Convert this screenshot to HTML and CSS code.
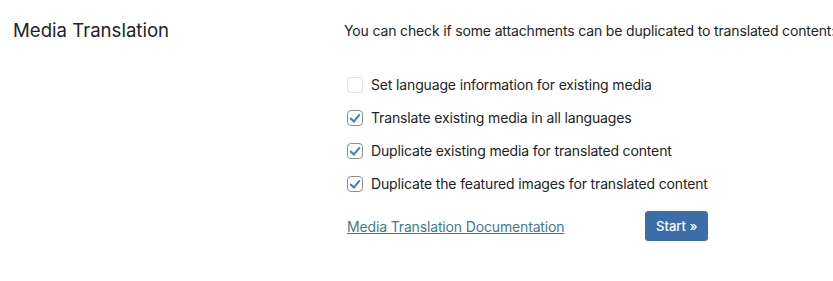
FILE: index.html
```html
<!DOCTYPE html>
<html>
<head>
    <title>Media Translation</title>
    <link rel="stylesheet" href="styles.css">
</head>
<body>
    <div class="settings-row">
        <h2 class="row-title">Media Translation</h2>
        <div class="row-body">
            <p class="description">You can check if some attachments can be duplicated to translated content:</p>

            <ul class="options">
                <li><label><input type="checkbox" disabled> Set language information for existing media</label></li>
                <li><label><input type="checkbox" checked> Translate existing media in all languages</label></li>
                <li><label><input type="checkbox" checked> Duplicate existing media for translated content</label></li>
                <li><label><input type="checkbox" checked> Duplicate the featured images for translated content</label></li>
            </ul>

            <div class="actions">
                <a href="#" class="doc-link">Media Translation Documentation</a>
                <button type="button" class="button-primary">Start &raquo;</button>
            </div>
        </div>
    </div>
</body>
</html>
```

FILE: styles.css
```css
html, body {
    overflow: hidden;
}

body {
    margin: 0;
    font-family: Inter, "Noto Sans", sans-serif;
    font-size: 14px;
    letter-spacing: -0.15px;
    color: #1d2327;
    background: #fff;
}

.settings-row {
    display: flex;
    padding-top: 17px;
}

.row-title {
    width: 331px;
    flex-shrink: 0;
    margin: 0;
    padding-left: 13px;
    font-size: 18.6px;
    font-weight: 400;
    letter-spacing: 0;
    line-height: 26px;
    color: #1d2327;
}

.row-body {
    white-space: nowrap;
}

.description {
    margin: 5px 0 0;
    line-height: 18px;
}

.options {
    list-style: none;
    margin: 37px 0 0;
    padding: 0 0 0 3px;
}

.options li {
    height: 33px;
}

.options label {
    display: flex;
    align-items: center;
    gap: 8px;
    height: 16px;
    line-height: 16px;
}

.options input[type="checkbox"] {
    appearance: none;
    width: 16px;
    height: 16px;
    margin: 0;
    border: 1px solid #8c8f94;
    border-radius: 4px;
    background: #fff;
    position: relative;
}

.options input[type="checkbox"]:disabled {
    border-color: rgba(220, 220, 222, 0.75);
    background: rgba(255, 255, 255, 0.5);
}

.options input[type="checkbox"]:checked::before {
    content: "";
    position: absolute;
    left: 4px;
    top: 1px;
    width: 4px;
    height: 8px;
    border: solid #3582c4;
    border-width: 0 2.5px 2.5px 0;
    transform: rotate(40deg);
}

.actions {
    display: flex;
    align-items: center;
    margin-top: 2px;
    padding-left: 3px;
}

.doc-link {
    color: #3b7b9a;
    text-decoration: underline;
    width: 298px;
}

.button-primary {
    font-family: inherit;
    font-size: 13px;
    font-weight: 500;
    letter-spacing: 0;
    color: #fff;
    background: #3b6ea8;
    border: 1px solid #3b6ea8;
    border-radius: 3px;
    height: 30px;
    padding: 0 10px;
    cursor: pointer;
}
```
